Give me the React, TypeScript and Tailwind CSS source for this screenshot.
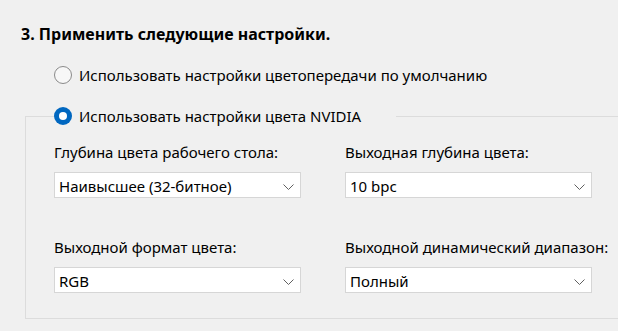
import React from "react";

function Chevron() {
  return (
    <svg width="11" height="6" viewBox="0 0 11 6" className="shrink-0">
      <path d="M0.5 0.5 L5.5 5.5 L10.5 0.5" fill="none" stroke="#606060" strokeWidth="1" />
    </svg>
  );
}

function Select({ value }: { value: string }) {
  return (
    <div className="flex h-[26px] w-[247px] items-start justify-between border border-[#d6d6d6] bg-white pl-[4px] pr-[6px] pt-[3px]">
      <span className="leading-[20px]">{value}</span>
      <span className="mt-[8px]">
        <Chevron />
      </span>
    </div>
  );
}

function Radio({ checked }: { checked: boolean }) {
  return checked ? (
    <span className="flex h-[18px] w-[18px] shrink-0 items-center justify-center rounded-full bg-[#0067c0]">
      <span className="h-[8px] w-[8px] rounded-full bg-white" />
    </span>
  ) : (
    <span className="h-[18px] w-[18px] shrink-0 rounded-full border border-[#8a8a8a] bg-[#f7f7f7]" />
  );
}

export default function App() {
  return (
    <div
      className="h-[331px] w-[618px] overflow-hidden bg-[#f0f0f0] text-[15px] leading-[20px] text-black"
      style={{ fontFamily: '"Noto Sans", "Open Sans", sans-serif' }}
    >
      <div className="pl-[21px] pt-[24px] text-[16px] font-bold">3. Применить следующие настройки.</div>
      <div className="mt-[21px] flex items-center gap-[7px] pl-[54px]">
        <Radio checked={false} />
        <span>Использовать настройки цветопередачи по умолчанию</span>
      </div>
      <fieldset className="ml-[25px] mr-[-20px] mt-[21px] border border-[#dcdcdc] pb-[25px] pl-[28px]">
        <legend className="flex w-[342px] items-center gap-[7px]">
          <Radio checked={true} />
          <span>Использовать настройки цвета NVIDIA</span>
        </legend>
        <div className="mt-[16px] grid grid-cols-[247px_247px] gap-x-[44px]">
          <div className="flex flex-col gap-[10px]">
            <div>Глубина цвета рабочего стола:</div>
            <Select value="Наивысшее (32-битное)" />
          </div>
          <div className="flex flex-col gap-[10px]">
            <div>Выходная глубина цвета:</div>
            <Select value="10 bpc" />
          </div>
          <div className="mt-[39px] flex flex-col gap-[10px]">
            <div>Выходной формат цвета:</div>
            <Select value="RGB" />
          </div>
          <div className="mt-[39px] flex flex-col gap-[10px]">
            <div className="whitespace-nowrap">Выходной динамический диапазон:</div>
            <Select value="Полный" />
          </div>
        </div>
      </fieldset>
    </div>
  );
}
